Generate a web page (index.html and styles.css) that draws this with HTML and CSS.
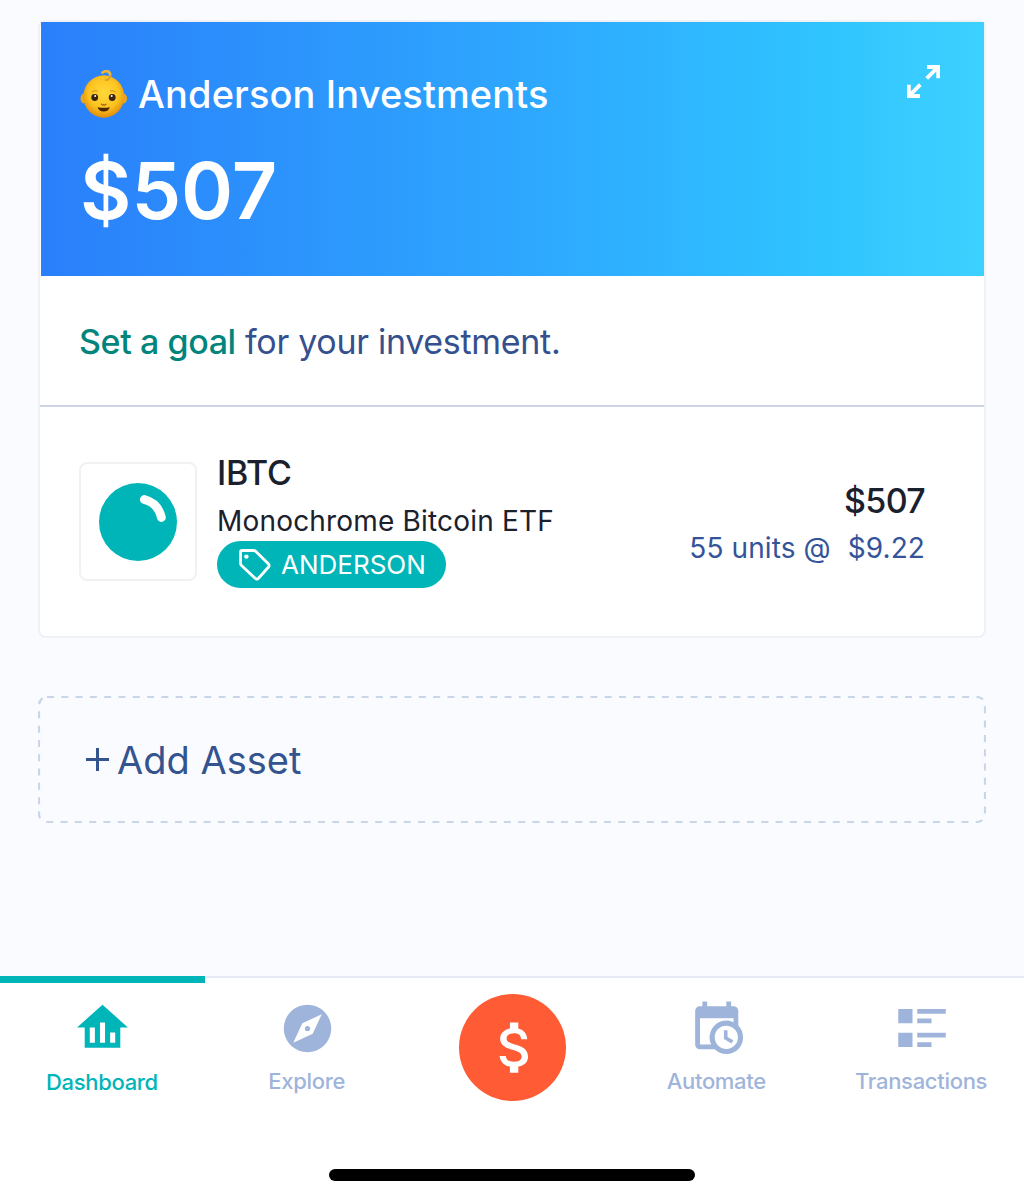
FILE: index.html
```html
<!DOCTYPE html>
<html lang="en">
<head>
    <meta charset="UTF-8">
    <meta name="viewport" content="width=device-width, initial-scale=1.0">
    <title>Dashboard</title>
    <link rel="stylesheet" href="styles.css">
</head>
<body>
    <main class="content">
        <section class="card">
            <header class="card-header">
                <div>
                    <h1 class="card-title">
                        <svg class="baby" viewBox="0 0 48 48" role="img" aria-label="Baby">
                            <defs>
                                <radialGradient id="skin" cx="50%" cy="42%" r="56%">
                                    <stop offset="0" stop-color="#ffd83b"/>
                                    <stop offset="0.65" stop-color="#fdc421"/>
                                    <stop offset="1" stop-color="#e5910c"/>
                                </radialGradient>
                            </defs>
                            <ellipse cx="4" cy="28.500" rx="3.500" ry="5" fill="#eda51b"/>
                            <ellipse cx="43.500" cy="28.500" rx="3.500" ry="5" fill="#eda51b"/>
                            <ellipse cx="23.800" cy="26.500" rx="20.500" ry="21.200" fill="url(#skin)"/>
                            <path d="M22.500 2.600C25.500 .2 30 1 30.200 4.800c.2 4-3 5.400-5 4.600" fill="none" stroke="#f0b63a" stroke-width="2.600" stroke-linecap="round"/>
                            <path d="M26 10.300c2.600-.4 4.200-2.300 4.300-4.500" fill="none" stroke="#b9770c" stroke-width="0.800" stroke-linecap="round"/>
                            <path d="M12 22q2.500-2.200 5.500-.8M30 21.200q3-1.400 5.500.8" fill="none" stroke="#d08e15" stroke-width="1"/>
                            <circle cx="14.700" cy="27.500" r="3.400" fill="#3a2310"/>
                            <circle cx="32.200" cy="27.500" r="3.400" fill="#3a2310"/>
                            <circle cx="15.200" cy="26" r="1" fill="#fff"/>
                            <circle cx="31.700" cy="26" r="1" fill="#fff"/>
                            <path d="M21.500 34.200q1 1.400 2.200.5 1.200.9 2.200-.5" fill="none" stroke="#a8650c" stroke-width="1.400" stroke-linecap="round"/>
                            <path d="M17.500 37.200q6.200 1.200 12.400 0-1.400 4.200-6.200 4.200t-6.200-4.200z" fill="#4a2408"/>
                        </svg>
                        <span>Anderson Investments</span>
                    </h1>
                    <p class="card-amount">$507</p>
                </div>
                <svg class="expand" viewBox="0 0 33 33" fill="none" stroke="#fff" stroke-width="3.800">
                    <path d="M20 2h11.200v11.200M30.500 2.700L19.700 13.300M13 31H1.900V19.800M2.600 30.300L13.300 19.700"/>
                </svg>
            </header>

            <p class="goal"><a class="goal-link">Set a goal</a> for your investment.</p>

            <div class="asset">
                <div class="asset-logo">
                    <svg viewBox="0 0 78 78">
                        <circle cx="39" cy="39" r="39" fill="#00b5b8"/>
                        <path d="M45.300 16.500Q59 20 62.400 34.500" fill="none" stroke="#fff" stroke-width="8.800" stroke-linecap="round"/>
                    </svg>
                </div>
                <div class="asset-info">
                    <h2 class="asset-code">IBTC</h2>
                    <p class="asset-name">Monochrome Bitcoin ETF</p>
                    <span class="tag">
                        <svg class="tag-icon" viewBox="0 0 32 32">
                            <path d="M3.300 1.500H14.500Q15.900 1.500 16.900 2.400L29.300 14.700Q31 16.500 29.300 18.300L19.500 29.300Q17.900 31 16.100 29.300L2.500 16.500Q1.500 15.500 1.500 14.200V3.300Q1.500 1.500 3.300 1.500Z" fill="none" stroke="#fff" stroke-width="2.800"/>
                            <circle cx="7.400" cy="7.600" r="2.200" fill="#fff"/>
                        </svg>
                        <span>ANDERSON</span>
                    </span>
                </div>
                <div class="asset-value">
                    <p class="value-total">$507</p>
                    <p class="value-units"><span>55 units @</span> <span>$9.22</span></p>
                </div>
            </div>
        </section>

        <div class="add-asset">
            <svg class="add-outline" viewBox="0 0 948 127">
                <rect x="1" y="1" width="946" height="125" rx="8"/>
            </svg>
            <svg class="plus" viewBox="0 0 23 23">
                <path d="M11.500 0v23M0 11.500h23"/>
            </svg>
            <span>Add Asset</span>
        </div>
    </main>

    <nav class="tabs">
        <a class="tab active">
            <span class="tab-icon">
                <svg width="61" height="61" viewBox="0 0 24 24"><path d="M12,3L2,12H5V20H19V12H22L12,3M9,18H7V12H9V18M13,18H11V10H13V18M17,18H15V14H17V18Z"/></svg>
            </span>
            <span class="tab-label">Dashboard</span>
        </a>
        <a class="tab">
            <span class="tab-icon">
                <svg width="57" height="57" viewBox="0 0 24 24"><path d="M14.190,14.190L6,18L9.810,9.810L18,6M12,2A10,10 0 0,0 2,12A10,10 0 0,0 12,22A10,10 0 0,0 22,12A10,10 0 0,0 12,2M12,10.900A1.100,1.100 0 0,0 10.900,12A1.100,1.100 0 0,0 12,13.100A1.100,1.100 0 0,0 13.100,12A1.100,1.100 0 0,0 12,10.900Z"/></svg>
            </span>
            <span class="tab-label">Explore</span>
        </a>
        <a class="tab">
            <span class="pay">
                <svg width="67" height="67" viewBox="0 0 24 24"><path d="M11.800 10.900c-2.270-.59-3-1.200-3-2.150 0-1.090 1.010-1.850 2.700-1.850 1.780 0 2.440.85 2.500 2.100h2.210c-.07-1.720-1.120-3.300-3.210-3.810V3h-3v2.160c-1.940.42-3.500 1.680-3.500 3.610 0 2.310 1.910 3.460 4.700 4.130 2.500.6 3 1.480 3 2.410 0 .69-.49 1.790-2.700 1.790-2.060 0-2.870-.92-2.980-2.100h-2.200c.12 2.190 1.760 3.420 3.680 3.830V21h3v-2.150c1.950-.37 3.500-1.500 3.500-3.550 0-2.840-2.430-3.810-4.700-4.400z"/></svg>
            </span>
        </a>
        <a class="tab">
            <span class="tab-icon">
                <svg width="57.500" height="57.500" viewBox="0 0 24 24"><path d="M15,13H16.500V15.820L18.940,17.230L18.190,18.530L15,16.690V13M19,8H5V19H9.670C9.240,18.090 9,17.070 9,16A7,7 0 0,1 16,9C17.070,9 18.090,9.240 19,9.670V8M5,21C3.890,21 3,20.100 3,19V5C3,3.890 3.890,3 5,3H6V1H8V3H16V1H18V3H19A2,2 0 0,1 21,5V11.100C22.240,12.360 23,14.090 23,16A7,7 0 0,1 16,23C14.090,23 12.360,22.240 11.100,21H5M16,11.150A4.850,4.850 0 0,0 11.150,16C11.150,18.680 13.320,20.850 16,20.850A4.850,4.850 0 0,0 20.850,16C20.850,13.320 18.680,11.150 16,11.150Z"/></svg>
            </span>
            <span class="tab-label">Automate</span>
        </a>
        <a class="tab">
            <span class="tab-icon">
                <svg width="48" height="38" viewBox="0 0 20 16"><path d="M0 0h6v6H0zM8 0h12v2H8zM8 4h6v2H8zM0 10h6v6H0zM8 10h12v2H8zM8 14h6v2H8z"/></svg>
            </span>
            <span class="tab-label">Transactions</span>
        </a>
    </nav>
    <div class="home-indicator"></div>
</body>
</html>
```
FILE: styles.css
```css
* {
    box-sizing: border-box;
}
body {
    font-family: Inter, "Liberation Sans", sans-serif;
    margin: 0;
    height: 1200px;
    display: flex;
    flex-direction: column;
    background-color: #fafbff;
    color: #1a202c;
    overflow: hidden;
}
h1, h2, p {
    margin: 0;
    font-weight: 400;
}
svg {
    display: block;
    flex: none;
}
.content {
    height: 976px;
    padding: 20px 38px 0;
}

/* Investment card */
.card {
    height: 618px;
    border: 2px solid #f0f1f4;
    border-radius: 8px;
    background-color: #fff;
}
.card-header {
    display: flex;
    justify-content: space-between;
    height: 254px;
    margin-left: 1px;
    padding: 48px 44px 0 39px;
    background: linear-gradient(90deg, #2a7ffa 0%, #2ea6fe 50%, #2fc3ff 82%, #3dd1ff 100%);
    color: #fff;
}
.card-title {
    display: flex;
    align-items: center;
    gap: 10px;
    font-size: 38px;
    font-weight: 500;
    line-height: 48px;
    letter-spacing: 0.12px;
}
.baby {
    width: 48px;
    height: 48px;
}
.card-amount {
    margin-top: 24px;
    font-size: 79px;
    font-weight: 600;
    line-height: 96px;
}
.expand {
    width: 33px;
    height: 33px;
    margin-top: -5px;
}
.goal {
    height: 131px;
    padding: 2px 39px 0;
    border-bottom: 2px solid #cdd3e6;
    color: #34508f;
    font-size: 34px;
    line-height: 127px;
    letter-spacing: -0.3px;
}
.goal-link {
    color: #00857c;
    font-weight: 500;
    letter-spacing: -0.4px;
}
.asset {
    display: flex;
    padding: 43px 59px 0 39px;
}
.asset-logo {
    display: flex;
    align-items: center;
    justify-content: center;
    width: 118px;
    height: 119px;
    margin-top: 12px;
    padding-top: 1px;
    border: 2px solid #f0f1f3;
    border-radius: 8px;
}
.asset-logo svg {
    width: 78px;
    height: 78px;
}
.asset-info {
    flex: 1;
    margin-left: 20px;
}
.asset-code {
    font-size: 34px;
    font-weight: 500;
    line-height: 46px;
    letter-spacing: -0.3px;
}
.asset-name {
    margin-top: 5px;
    font-size: 28px;
    line-height: 40px;
    letter-spacing: 0.18px;
}
.tag {
    display: inline-flex;
    align-items: center;
    gap: 10px;
    height: 47px;
    padding: 0 20px 0 22px;
    border-radius: 24px;
    background-color: #00b5b8;
    color: #fff;
    font-size: 26px;
}
.tag-icon {
    width: 32px;
    height: 32px;
}
.asset-value {
    padding-top: 28px;
    text-align: right;
}
.value-total {
    font-size: 34px;
    font-weight: 500;
    line-height: 46px;
    letter-spacing: -0.7px;
}
.value-units {
    display: flex;
    gap: 17px;
    color: #34549a;
    font-size: 28px;
    line-height: 49px;
    letter-spacing: 0.1px;
}

/* Add asset button */
.add-asset {
    position: relative;
    display: flex;
    align-items: center;
    gap: 8px;
    width: 948px;
    height: 127px;
    margin-top: 58px;
    padding-left: 48px;
    color: #34548f;
    font-size: 38px;
}
.add-outline {
    position: absolute;
    top: 0;
    left: 0;
    width: 948px;
    height: 127px;
    fill: none;
    stroke: #c8d6e8;
    stroke-width: 2.2;
    stroke-dasharray: 7 7.3;
}
.plus {
    width: 23px;
    height: 23px;
    stroke: #34548f;
    stroke-width: 3;
}

/* Bottom tabs */
.tabs {
    display: grid;
    grid-template-columns: repeat(5, 1fr);
    height: 224px;
    border-top: 2px solid #e8ebf5;
    background-color: #fff;
}
.tab {
    display: flex;
    flex-direction: column;
    align-items: center;
    padding-top: 20px;
    color: #9fb4da;
    fill: #9fb4da;
}
.tab.active {
    margin-top: -2px;
    padding-top: 14px;
    border-top: 7px solid #00b5b8;
    color: #00b5b8;
    fill: #00b5b8;
}
.tab-icon {
    display: flex;
    align-items: center;
    justify-content: center;
    height: 60px;
}
.tab-label {
    margin-top: 8px;
    margin-right: 1px;
    font-size: 22px;
    font-weight: 500;
    line-height: 30px;
    letter-spacing: -0.3px;
}
.tab.active .tab-label {
    margin-top: 10px;
}
.pay {
    display: flex;
    align-items: center;
    justify-content: center;
    width: 107px;
    height: 107px;
    margin-top: -4px;
    margin-left: 1px;
    padding-left: 6px;
    border-radius: 50%;
    background-color: #ff5c35;
    fill: #fff;
}
.home-indicator {
    position: absolute;
    left: 329px;
    top: 1169px;
    width: 366px;
    height: 12px;
    border-radius: 6px;
    background-color: #000;
}
```
